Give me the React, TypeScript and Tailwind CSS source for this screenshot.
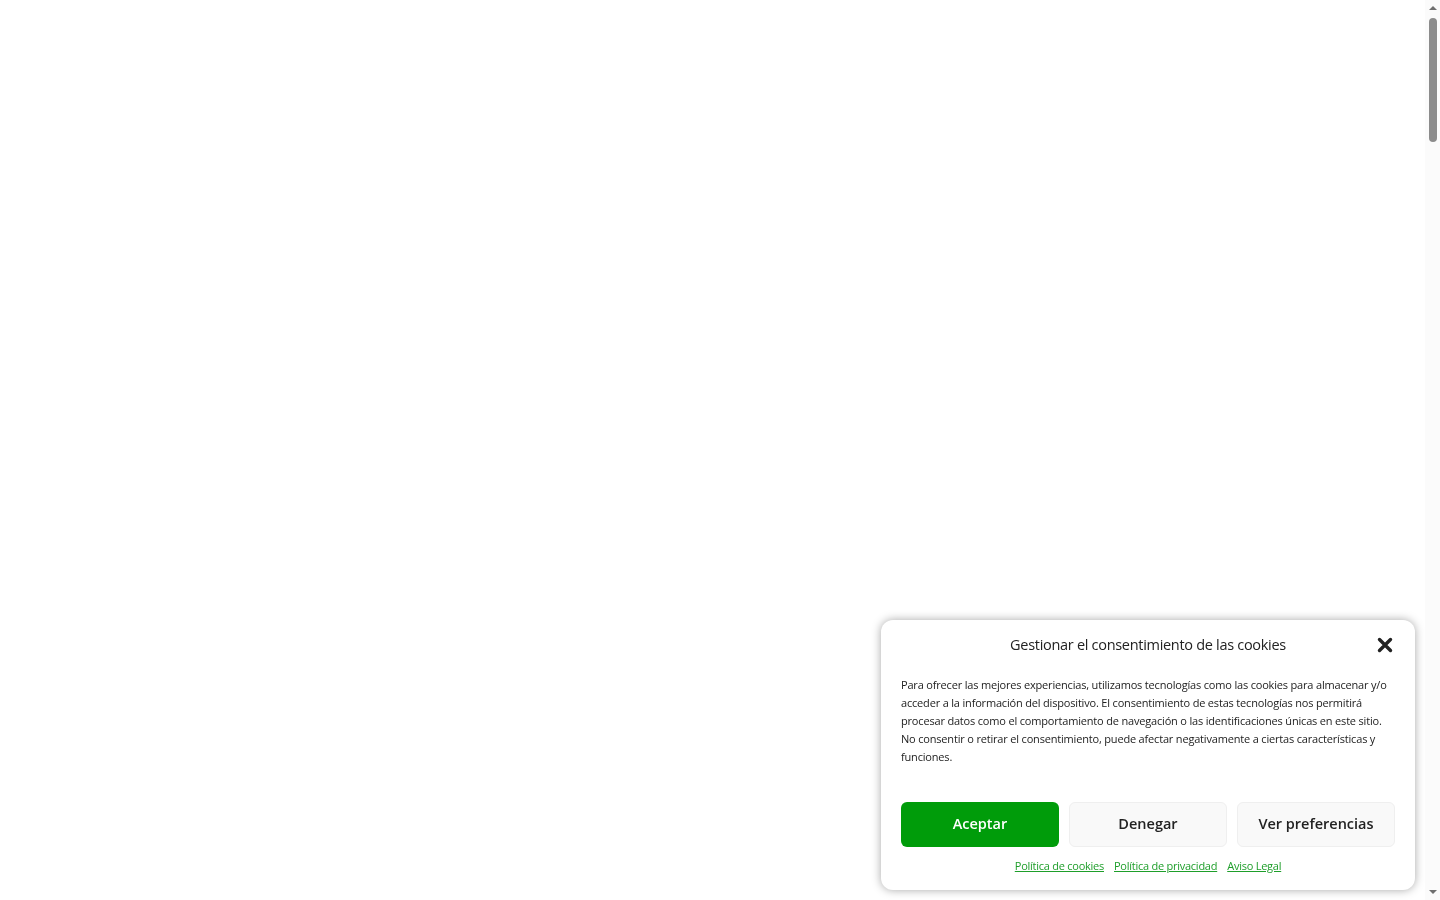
import { useState } from "react";

const font = { fontFamily: '"Open Sans", "Liberation Sans", sans-serif' };

function CookieBanner({ onClose }: { onClose: () => void }) {
  return (
    <div
      className="fixed bottom-[10px] right-[25px] z-50 w-[534px] rounded-xl bg-white px-5 pt-[14px] pb-[16px] text-[#222] shadow-[0_0_10px_rgba(0,0,0,0.35)]"
      style={font}
    >
      <div className="relative flex h-[22px] items-center justify-center">
        <h2 className="text-[14.5px] font-normal tracking-[-0.3px] text-[#222]">
          Gestionar el consentimiento de las cookies
        </h2>
        <button
          type="button"
          onClick={onClose}
          className="absolute right-[2px] top-[3px] cursor-pointer text-[#222]"
          aria-label="Cerrar"
        >
          <svg width="16" height="16" viewBox="0 0 16 16">
            <path d="M2.5 2.5 L13.5 13.5 M13.5 2.5 L2.5 13.5" stroke="currentColor" strokeWidth="3.4" strokeLinecap="round" />
          </svg>
        </button>
      </div>

      <p className="mt-[20px] text-[11px] leading-[18px] tracking-[-0.18px] text-[#222]">
        Para ofrecer las mejores experiencias, utilizamos tecnologías como las cookies para almacenar y/o
        <br />
        acceder a la información del dispositivo. El consentimiento de estas tecnologías nos permitirá
        <br />
        procesar datos como el comportamiento de navegación o las identificaciones únicas en este sitio.
        <br />
        No consentir o retirar el consentimiento, puede afectar negativamente a ciertas características y
        <br />
        funciones.
      </p>

      <div className="mt-[36px] grid grid-cols-3 gap-[10px]">
        <button
          type="button"
          className="h-[45px] cursor-pointer rounded-md bg-[#009c0a] text-[14.5px] font-semibold text-white"
        >
          Aceptar
        </button>
        <button
          type="button"
          className="h-[45px] cursor-pointer rounded-md border border-[#efefef] bg-[#f9f9f9] text-[14.5px] font-semibold text-[#222]"
        >
          Denegar
        </button>
        <button
          type="button"
          className="h-[45px] cursor-pointer rounded-md border border-[#efefef] bg-[#f9f9f9] text-[14.5px] font-semibold text-[#222]"
        >
          Ver preferencias
        </button>
      </div>

      <div className="mt-[11px] flex justify-center gap-[10px] text-[11px] tracking-[-0.25px]">
        <a href="#" className="text-[#1e9e2a] underline">Política de cookies</a>
        <a href="#" className="text-[#1e9e2a] underline">Política de privacidad</a>
        <a href="#" className="text-[#1e9e2a] underline">Aviso Legal</a>
      </div>
    </div>
  );
}

// page scrollbar, drawn since the headless window hides the native one
function ScrollBar() {
  return (
    <div className="fixed right-0 top-0 z-40 flex h-screen w-[15px] flex-col items-center bg-[#fbfbfb]">
      <div className="mt-[6px] h-0 w-0 border-x-[4px] border-b-[4px] border-x-transparent border-b-[#6f6f6f]" />
      <div className="mt-[8px] h-[124px] w-[8px] rounded-full bg-[#8c8c8c]" />
      <div className="flex-1" />
      <div className="mb-[6px] h-0 w-0 border-x-[4px] border-t-[4px] border-x-transparent border-t-[#6f6f6f]" />
    </div>
  );
}

export default function App() {
  const [open, setOpen] = useState(true);

  return (
    <div className="h-screen w-full overflow-y-scroll bg-white">
      <div className="h-[6400px]" />
      <ScrollBar />
      {open && <CookieBanner onClose={() => setOpen(false)} />}
    </div>
  );
}
